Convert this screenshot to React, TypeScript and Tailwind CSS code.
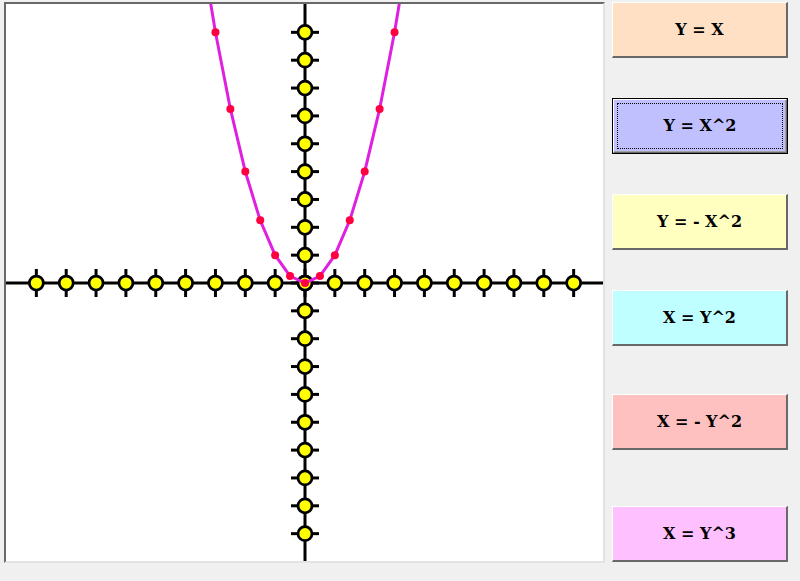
import React from "react";

const W = 597;
const H = 557;
const OX = 299;
const OY = 279;
const SX = 29.85;
const SY = 27.85;

function px(x: number) {
  return OX + x * SX;
}
function py(y: number) {
  return OY - y * SY;
}

function Graph() {
  const ticks = [-9, -8, -7, -6, -5, -4, -3, -2, -1, 0, 1, 2, 3, 4, 5, 6, 7, 8, 9];
  const curve: string[] = [];
  for (let x = -3.5; x <= 3.5001; x += 0.5) {
    curve.push(`${px(x).toFixed(2)},${py(x * x).toFixed(2)}`);
  }
  const dots: number[] = [];
  for (let x = -3; x <= 3.0001; x += 0.5) dots.push(x);
  return (
    <svg width={W} height={H} viewBox={`0 0 ${W} ${H}`} className="block">
      <line x1={0} y1={OY} x2={W} y2={OY} stroke="#000" strokeWidth={3} />
      <line x1={OX} y1={0} x2={OX} y2={H} stroke="#000" strokeWidth={3} />
      {ticks.map((t) => (
        <g key={"h" + t}>
          <line x1={px(t)} y1={OY - 14} x2={px(t)} y2={OY + 14} stroke="#000" strokeWidth={3} />
          <circle cx={px(t)} cy={OY} r={7} fill="#ffff00" stroke="#000" strokeWidth={2.75} />
        </g>
      ))}
      {ticks.map((t) => (
        <g key={"v" + t}>
          <line x1={OX - 14} y1={py(t)} x2={OX + 14} y2={py(t)} stroke="#000" strokeWidth={3} />
          <circle cx={OX} cy={py(t)} r={7} fill="#ffff00" stroke="#000" strokeWidth={2.75} />
        </g>
      ))}
      <polyline points={curve.join(" ")} fill="none" stroke="#e020e0" strokeWidth={3} />
      {dots.map((x) => (
        <circle key={x} cx={px(x)} cy={py(x * x)} r={4} fill="#ff0040" />
      ))}
    </svg>
  );
}

type Btn = { label: string; bg: string; mt: string; focus?: boolean };

const buttons: Btn[] = [
  { label: "Y = X", bg: "bg-[#ffe0c4]", mt: "mt-0" },
  { label: "Y = X^2", bg: "bg-[#c0c0ff]", mt: "mt-[40px]", focus: true },
  { label: "Y = - X^2", bg: "bg-[#ffffc0]", mt: "mt-[40px]" },
  { label: "X = Y^2", bg: "bg-[#c0ffff]", mt: "mt-[40px]" },
  { label: "X = - Y^2", bg: "bg-[#ffc0c0]", mt: "mt-[48px]" },
  { label: "X = Y^3", bg: "bg-[#ffc0ff]", mt: "mt-[56px]" },
];

function Button({ b }: { b: Btn }) {
  const text = (
    <span className="text-[16px] font-bold text-black" style={{ fontFamily: '"DejaVu Serif", serif' }}>
      {b.label}
    </span>
  );
  if (b.focus) {
    return (
      <div className={`${b.mt} h-[56px] w-[176px] border border-black`}>
        <div className={`h-full w-full ${b.bg} border-t border-l border-white border-r border-b border-r-[#696969] border-b-[#696969] shadow-[inset_-1px_-1px_0_#a0a0a0] p-[3px]`}>
          <div className="flex h-full w-full items-center justify-center border border-dotted border-black">
            {text}
          </div>
        </div>
      </div>
    );
  }
  return (
    <div
      className={`${b.mt} flex h-[56px] w-[176px] items-center justify-center ${b.bg} border-t border-l border-white border-r-2 border-b-2 border-r-[#696969] border-b-[#696969]`}
    >
      {text}
    </div>
  );
}

export default function App() {
  return (
    <div className="flex h-[581px] w-[800px] bg-[#f0f0f0] pl-[4px] pt-[2px]">
      <div className="h-[561px] w-[601px] border-t-2 border-l-2 border-t-[#696969] border-l-[#696969] border-r-2 border-b-2 border-r-[#e3e3e3] border-b-[#e3e3e3] bg-white overflow-hidden">
        <Graph />
      </div>
      <div className="ml-[7px] flex flex-col">
        {buttons.map((b) => (
          <Button key={b.label} b={b} />
        ))}
      </div>
    </div>
  );
}
